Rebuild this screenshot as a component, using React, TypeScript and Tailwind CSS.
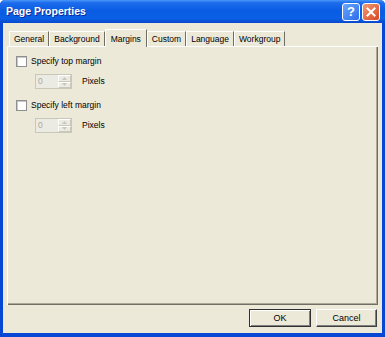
import React from 'react';

const tabs = ['General', 'Background', 'Margins', 'Custom', 'Language', 'Workgroup'];

function Checkbox({ label }: { label: string }) {
  return (
    <div className="flex items-center h-[11px] gap-[4px]">
      <span className="w-[11px] h-[11px] bg-white border border-[#8e8f8f] shadow-[inset_1px_1px_0_#c8c8c8]" />
      <span>{label}</span>
    </div>
  );
}

function SpinButton({ up }: { up?: boolean }) {
  return (
    <div className="flex-1 flex items-center justify-center border-t border-l border-white border-r border-b border-r-[#c9c7ba] border-b-[#c9c7ba]">
      <svg width="5" height="3" viewBox="0 0 5 3">
        {up ? <path d="M2.5 0 L5 3 L0 3 Z" fill="#c9c7ba" /> : <path d="M0 0 L5 0 L2.5 3 Z" fill="#c9c7ba" />}
      </svg>
    </div>
  );
}

function Spinner() {
  return (
    <div className="flex items-center gap-[10px]">
      <div className="flex w-[37px] h-[15px] border border-[#c9c7ba] bg-[#ebebe4]">
        <div className="flex-1 flex items-center pl-[2px] text-[#aca899]">0</div>
        <div className="w-[13px] flex flex-col">
          <SpinButton up />
          <SpinButton />
        </div>
      </div>
      <span>Pixels</span>
    </div>
  );
}

export default function App() {
  return (
    <div className="w-[385px] h-[337px] flex flex-col bg-[#0846d4] rounded-t-[5px] overflow-hidden font-['Liberation_Sans',Arial,sans-serif] text-[8.5px] leading-none text-black">
      {/* title bar */}
      <div className="h-[23px] flex items-center pl-[6px] pr-[5px] bg-[linear-gradient(180deg,#4a96fa_0%,#1d6cec_12%,#0a5ce2_45%,#0b60e6_80%,#0848cc_100%)]">
        <span className="flex-1 text-white font-bold text-[10.5px] [text-shadow:1px_1px_0_#0a2a9a]">Page Properties</span>
        <div className="flex gap-[2px]">
          <div className="w-[18px] h-[18px] rounded-[3px] border border-white bg-[linear-gradient(135deg,#6aa6ff,#2a6cea)] flex items-center justify-center text-white font-bold text-[13px]">?</div>
          <div className="w-[18px] h-[18px] rounded-[3px] border border-white bg-[linear-gradient(135deg,#f39a78,#d9461f)] flex items-center justify-center">
            <svg width="10" height="10" viewBox="0 0 10 10">
              <path d="M1.5 1.5 L8.5 8.5 M8.5 1.5 L1.5 8.5" stroke="white" strokeWidth="2" strokeLinecap="square" />
            </svg>
          </div>
        </div>
      </div>

      {/* body */}
      <div className="flex-1 flex flex-col bg-[#ece9d8] mx-[3px] mb-[4px] px-[4px] pt-[6px]">
        <div className="flex items-end h-[17px] pl-[2px]">
          {tabs.map((t) =>
            t === 'Margins' ? (
              <div
                key={t}
                className="relative z-10 -mb-px h-[18px] px-[5px] pt-[5px] bg-[#ece9d8] border-t border-l border-white border-r border-r-[#716f64]"
              >
                {t}
              </div>
            ) : (
              <div
                key={t}
                className="h-[15px] px-[4px] flex items-center border-t border-l border-white border-r border-r-[#716f64]"
              >
                {t}
              </div>
            )
          )}
        </div>

        <div className="flex-1 flex flex-col border-t border-l border-white shadow-[inset_-1px_-1px_0_#716f64,inset_-2px_-2px_0_#aca899] pl-[8px] pt-[9px]">
          <Checkbox label="Specify top margin" />
          <div className="mt-[7px] pl-[19px]">
            <Spinner />
          </div>
          <div className="mt-[11px]">
            <Checkbox label="Specify left margin" />
          </div>
          <div className="mt-[7px] pl-[19px]">
            <Spinner />
          </div>
        </div>

        <div className="flex justify-end gap-[5px] pt-[4px] pb-[6px] pr-[1px] text-[9px]">
          <div className="w-[62px] h-[18px] flex items-center justify-center border border-[#303030] shadow-[inset_1px_1px_0_#ffffff,inset_-1px_-1px_0_#808080]">
            OK
          </div>
          <div className="w-[61px] h-[18px] flex items-center justify-center border-t border-l border-white border-r border-b border-r-[#404040] border-b-[#404040] shadow-[inset_-1px_-1px_0_#808080]">
            Cancel
          </div>
        </div>
      </div>
    </div>
  );
}
